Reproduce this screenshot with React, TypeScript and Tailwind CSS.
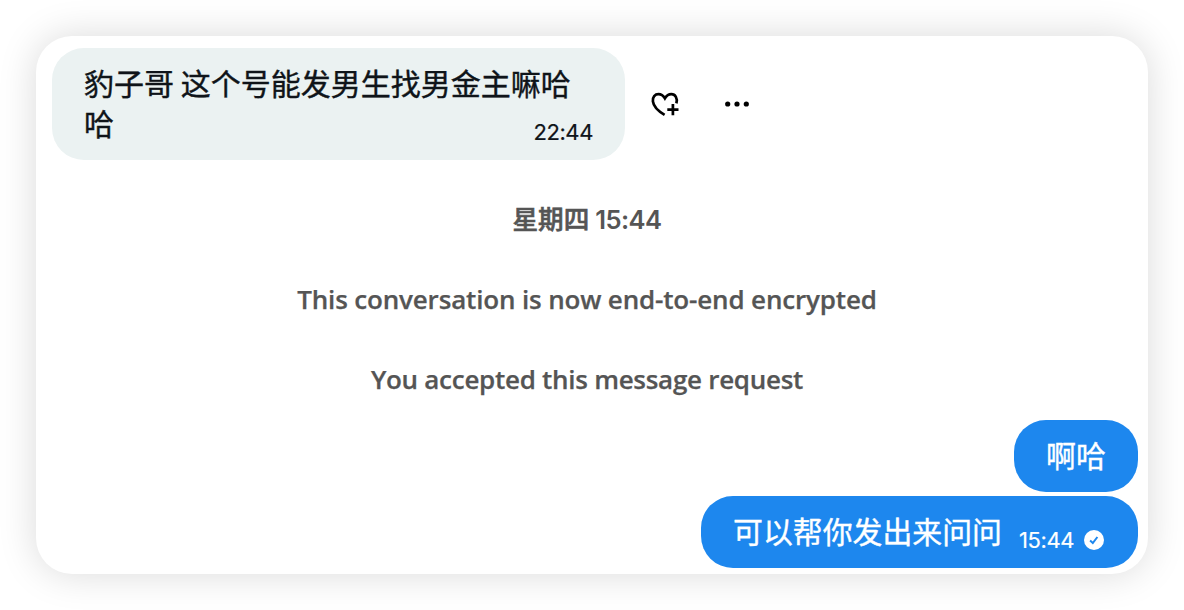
import React from "react";

function HeartPlusIcon() {
  return (
    <svg width="30" height="28" viewBox="0 0 30 28" fill="none" stroke="#000" strokeWidth="2.7">
      <path d="M26.4 13.4C27.9 8.2 25.2 4.2 21.3 4.2C18.7 4.2 16.5 5.7 14.9 8.3C13.3 5.7 11.1 4.2 8.5 4.2C5 4.2 2.4 7.1 2.9 11.4C3.5 16.5 8 21 14.6 24.8" />
      <path d="M22.9 14.1V25.3M17.3 19.7H28.5" />
    </svg>
  );
}

function MoreIcon() {
  return (
    <svg width="26" height="8" viewBox="0 0 26 8" fill="#000">
      <circle cx="3.7" cy="4" r="2.6" />
      <circle cx="13" cy="4" r="2.6" />
      <circle cx="22.3" cy="4" r="2.6" />
    </svg>
  );
}

function SentIcon() {
  return (
    <svg width="20" height="20" viewBox="0 0 20 20" fill="none">
      <circle cx="10" cy="10" r="10" fill="#fff" />
      <path d="M6.1 10.6L8.8 13L13.4 7" stroke="#1d87ee" strokeWidth="2" />
    </svg>
  );
}

function Notice({ children }: { children: React.ReactNode }) {
  return <div className="flex h-20 items-center justify-center whitespace-nowrap pb-0.5">{children}</div>;
}

export default function App() {
  return (
    <div className="flex h-[610px] w-[1184px] bg-white p-9">
      <main className="flex h-[538px] w-[1112px] flex-col rounded-[36px] bg-white pt-3 pr-[10px] pl-4 shadow-[0_0_38px_rgba(0,0,0,0.15)]">
        <div className="flex h-28 items-center">
          <div className="flex h-28 w-[573px] flex-col rounded-[32px] bg-[#ebf2f2] px-8 pt-[14px] font-['Noto_Sans_CJK_SC',sans-serif] text-[30px] leading-10 text-[#0f1419]">
            <p className="whitespace-nowrap [-webkit-text-stroke:0.4px]">豹子哥 这个号能发男生找男金主嘛哈</p>
            <div className="flex justify-between">
              <p className="[-webkit-text-stroke:0.4px]">哈</p>
              <time className="mt-[18px] font-['Inter',sans-serif] text-[22px] leading-6 tracking-[-0.4px] [-webkit-text-stroke:0.2px]">22:44</time>
            </div>
          </div>
          <button className="ml-[25px]" aria-label="React"><HeartPlusIcon /></button>
          <button className="ml-[44px] flex" aria-label="More"><MoreIcon /></button>
        </div>
        <section className="mt-5 flex h-60 flex-col pr-4 font-['Open_Sans',sans-serif] text-[26px] font-semibold text-[#555]">
          <Notice>
            <span className="mb-[2px] font-['Noto_Sans_CJK_SC',sans-serif] text-[25.6px] font-medium [-webkit-text-stroke:0.6px]">星期四</span>
            <span className="mt-[2px] ml-[6px] font-['Inter',sans-serif] text-[25.6px] tracking-[-0.6px]">15:44</span>
          </Notice>
          <Notice><span className="tracking-[-0.16px] [-webkit-text-stroke:0.25px]">This conversation is now end-to-end encrypted</span></Notice>
          <Notice><span className="tracking-[-0.28px] [-webkit-text-stroke:0.25px]">You accepted this message request</span></Notice>
        </section>
        <section className="flex flex-col items-end gap-1 font-['Noto_Sans_CJK_SC',sans-serif] text-[29.9px] leading-10 text-white">
          <div className="flex h-[72px] w-[124px] items-center rounded-[32px] bg-[#1d87ee] pb-1 pl-8 [-webkit-text-stroke:0.4px]">啊哈</div>
          <div className="flex h-[72px] w-[437px] items-center rounded-[32px] bg-[#1d87ee] pl-8">
            <span className="mb-1 whitespace-nowrap [-webkit-text-stroke:0.4px]">可以帮你发出来问问</span>
            <time className="mt-4 ml-[17px] font-['Inter',sans-serif] text-[22px] leading-6 tracking-[-0.4px] [-webkit-text-stroke:0.2px]">15:44</time>
            <span className="mt-4 ml-[10px]"><SentIcon /></span>
          </div>
        </section>
      </main>
    </div>
  );
}
